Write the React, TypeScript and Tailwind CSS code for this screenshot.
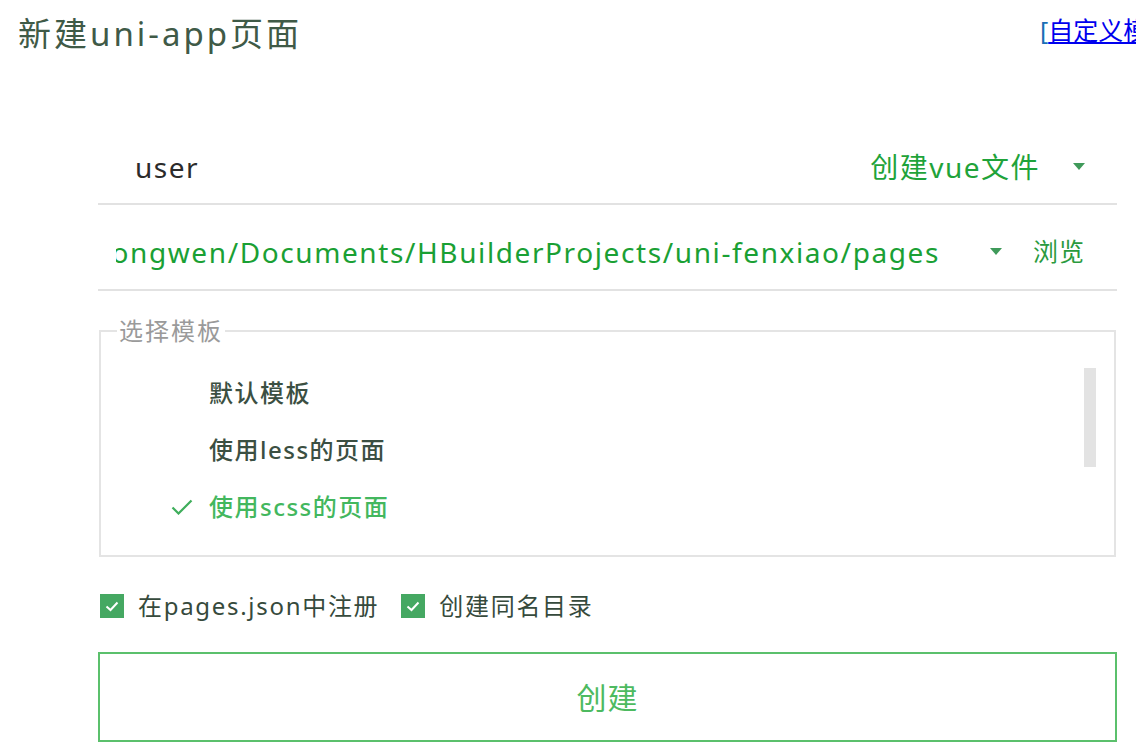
import React from "react";

const font = { fontFamily: '"Noto Sans", "Noto Sans CJK SC", sans-serif' };

const Caret = () => (
  <svg width="12" height="8" viewBox="0 0 12 8" className="shrink-0">
    <path d="M0 0 L12 0 L6 7 Z" fill="#3f9a5a" />
  </svg>
);

const Check = ({ color }: { color: string }) => (
  <svg width="22" height="16" viewBox="0 0 22 16" fill="none">
    <path d="M1.5 8.5 L7.5 14.5 L20.5 1.5" stroke={color} strokeWidth="2.2" />
  </svg>
);

const CheckBox = () => (
  <span className="w-[24px] h-[24px] bg-[#45a862] flex items-center justify-center shrink-0">
    <svg width="14" height="11" viewBox="0 0 14 11" fill="none">
      <path d="M1.5 5.5 L5.5 9 L12.5 1.5" stroke="#ffffff" strokeWidth="2" />
    </svg>
  </span>
);

const templates = [
  { name: "默认模板", active: false },
  { name: "使用less的页面", active: false },
  { name: "使用scss的页面", active: true },
];

const App = () => {
  return (
    <div
      className="w-[1136px] h-[752px] bg-white overflow-hidden flex flex-col"
      style={font}
    >
      <div className="flex items-start pt-[14px] whitespace-nowrap">
        <h1 className="w-[1040px] pl-[18px] text-[33px] leading-[40px] tracking-[3px] text-[#3f5a47] shrink-0">
          新建uni-app页面
        </h1>
        <span className="text-[25px] leading-[32px] shrink-0">
          <span className="text-[#1a6fb5]">[</span>
          <a className="text-[#0000ee] underline">自定义模板]</a>
        </span>
      </div>

      <div className="ml-[98px] w-[1019px] flex flex-col mt-[65px]">
        <div className="h-[86px] flex items-center border-b-2 border-[#e2e2e2] pt-[12px] pl-[37px] pr-[32px] tracking-[1.5px]">
          <span className="flex-1 text-[28px] text-[#2b2b2b]">user</span>
          <span className="text-[28px] text-[#1fa33a] mr-[33px]">创建vue文件</span>
          <Caret />
        </div>

        <div className="h-[86px] flex items-center border-b-2 border-[#e2e2e2] pt-[10px] pr-[32px]">
          <div className="w-[824px] ml-[18px] overflow-hidden flex justify-end">
            <span className="text-[28px] tracking-[1.6px] text-[#1aa034] whitespace-nowrap shrink-0">
              /Users/dongwen/Documents/HBuilderProjects/uni-fenxiao/pages
            </span>
          </div>
          <span className="ml-[50px]">
            <Caret />
          </span>
          <span className="ml-auto text-[25px] tracking-[1px] text-[#2a9a3e]">浏览</span>
        </div>

        <fieldset className="mt-[24px] border-2 border-[#e4e4e4] pl-[16px] mx-[1px]">
          <legend className="px-[2px] text-[24px] leading-[32px] tracking-[2px] text-[#9a9a9a]">
            选择模板
          </legend>
          <div className="relative pt-[17px] pb-[20px]">
            {templates.map((t) => (
              <div key={t.name} className="h-[57px] flex items-center">
                <div className="w-[92px] flex justify-end pr-[16px]">
                  {t.active && <Check color="#3fae5c" />}
                </div>
                <span
                  className={
                    t.active
                      ? "text-[24px] tracking-[1.5px] text-[#43b75e] font-medium"
                      : "text-[24px] tracking-[1.5px] text-[#3b4f42] font-medium"
                  }
                >
                  {t.name}
                </span>
              </div>
            ))}
            <div className="absolute right-[18px] top-[21px] w-[12px] h-[99px] bg-[#e3e3e3]" />
          </div>
        </fieldset>

        <div className="flex items-center mt-[31px] ml-[2px] tracking-[1.7px]">
          <CheckBox />
          <span className="ml-[14px] text-[24px] text-[#364a3c]">在pages.json中注册</span>
          <span className="ml-[22px]">
            <CheckBox />
          </span>
          <span className="ml-[14px] text-[24px] text-[#364a3c]">创建同名目录</span>
        </div>

        <button className="mt-[28px] h-[90px] border-2 border-[#5bc06c] bg-white text-[30px] text-[#4dba60] tracking-[1px] flex items-center justify-center">
          创建
        </button>
      </div>
    </div>
  );
};

export default App;
